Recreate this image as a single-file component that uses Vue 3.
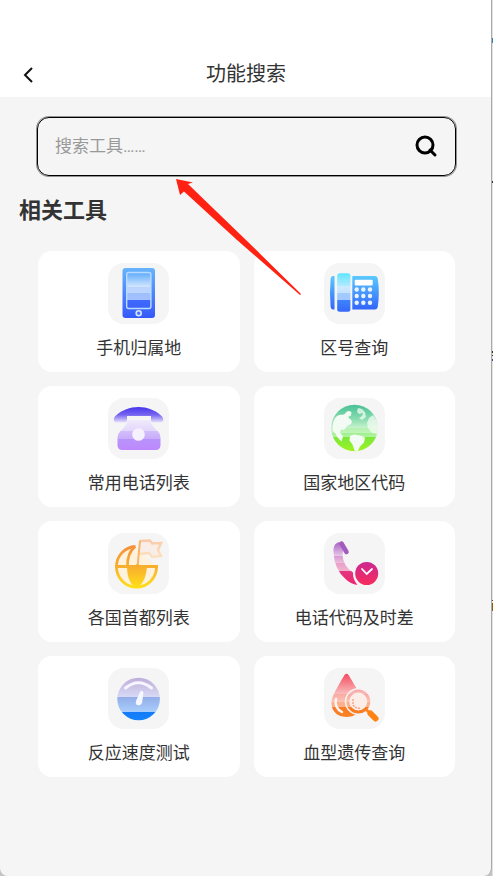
<script setup>
import { ref } from 'vue'

const keyword = ref('')

const tools = [
  { icon: 'mobile', name: '手机归属地' },
  { icon: 'telephone', name: '区号查询' },
  { icon: 'classic', name: '常用电话列表' },
  { icon: 'globe', name: '国家地区代码' },
  { icon: 'capital', name: '各国首都列表' },
  { icon: 'timezone', name: '电话代码及时差' },
  { icon: 'gauge', name: '反应速度测试' },
  { icon: 'blood', name: '血型遗传查询' }
]
</script>

<template>
  <div class="desktop">
    <div class="phone">
      <header class="navbar">
        <button class="back" type="button" aria-label="返回">
          <svg width="20" height="20" viewBox="0 0 20 20">
            <path d="M13 3 6 10l7 7" fill="none" stroke="#111" stroke-width="2" />
          </svg>
        </button>
        <h1>功能搜索</h1>
      </header>

      <main>
        <form class="search" @submit.prevent>
          <input v-model="keyword" type="text" placeholder="搜索工具……" aria-label="搜索工具" />
          <button type="submit" aria-label="搜索">
            <svg width="24" height="24" viewBox="0 0 24 24" fill="none" stroke="#000" stroke-width="3">
              <circle cx="11" cy="11" r="8" />
              <path d="m16 16 5 5" stroke-linecap="round" />
            </svg>
          </button>
        </form>

        <h2>相关工具</h2>

        <nav class="grid">
          <a v-for="tool in tools" :key="tool.icon" class="card" href="#">
            <span class="tile">
              <svg v-if="tool.icon === 'mobile'" viewBox="0 0 61 61">
                <defs>
                  <linearGradient id="mobileBody" x2="0" y2="1">
                    <stop offset="0" stop-color="#68b4fd" />
                    <stop offset="1" stop-color="#3458fa" />
                  </linearGradient>
                  <linearGradient id="mobileScreen" x2="0" y2="1">
                    <stop offset="0" stop-color="#5eaafb" />
                    <stop offset=".4" stop-color="#d3e7ff" />
                    <stop offset=".4" stop-color="#b9d4fe" />
                    <stop offset=".57" stop-color="#c0d7ff" />
                    <stop offset=".57" stop-color="#9ebffc" />
                    <stop offset=".76" stop-color="#a6c0ff" />
                    <stop offset=".76" stop-color="#3e69fb" />
                    <stop offset="1" stop-color="#3c63fa" />
                  </linearGradient>
                </defs>
                <rect x="14.5" y="5" width="32.5" height="50" rx="3" fill="url(#mobileBody)" />
                <rect x="18.7" y="9.5" width="24.2" height="36" rx="2" fill="url(#mobileScreen)" stroke="#b8dcff" stroke-width="1.4" />
                <circle cx="30.7" cy="50.2" r="2.5" fill="#4a73fb" stroke="#d5e6ff" stroke-width="1.6" />
              </svg>

              <svg v-else-if="tool.icon === 'telephone'" viewBox="0 0 61 61">
                <defs>
                  <linearGradient id="telBody" x2="0" y2="1">
                    <stop offset="0" stop-color="#5bcafd" />
                    <stop offset="1" stop-color="#3264fb" />
                  </linearGradient>
                  <linearGradient id="telHandset" x2="0" y2="1">
                    <stop offset="0" stop-color="#62e5ff" />
                    <stop offset=".34" stop-color="#b4ebff" />
                    <stop offset=".34" stop-color="#cdeaff" />
                    <stop offset=".52" stop-color="#c5e1ff" />
                    <stop offset=".52" stop-color="#a1cbff" />
                    <stop offset=".7" stop-color="#a3c6ff" />
                    <stop offset=".7" stop-color="#3e83fd" />
                    <stop offset="1" stop-color="#3568fa" />
                  </linearGradient>
                </defs>
                <path d="M10.5 13H9q-2 0-2.4 3-1.2 13.5 0 27.5.4 3 2.4 3h1.5z" fill="url(#telBody)" />
                <rect x="13.2" y="10.3" width="13.2" height="38.5" rx="2.5" fill="url(#telHandset)" />
                <path d="M28.3 13h22.5q2.5 0 3 3 2 13.5 0 27.5-.5 3-3 3H28.3z" fill="url(#telBody)" />
                <rect x="30.7" y="16.8" width="18" height="5.6" rx="1" fill="#fff" />
                <g fill="#e9f4ff">
                  <template v-for="y in [26.5, 33, 39.7]" :key="y">
                    <circle v-for="x in [32.7, 39.3, 46]" :key="x" :cx="x" :cy="y" r="2.2" />
                  </template>
                </g>
              </svg>

              <svg v-else-if="tool.icon === 'classic'" viewBox="0 0 61 61">
                <defs>
                  <linearGradient id="classicTop" x2="0" y2="1">
                    <stop offset="0" stop-color="#4735ed" />
                    <stop offset=".5" stop-color="#7664f1" />
                    <stop offset="1" stop-color="#e8e2fb" />
                  </linearGradient>
                  <linearGradient id="classicBase" x2="0" y2="1">
                    <stop offset="0" stop-color="#f0eafb" />
                    <stop offset=".36" stop-color="#e2d6fb" />
                    <stop offset=".36" stop-color="#d3bffc" />
                    <stop offset=".62" stop-color="#c9acfa" />
                    <stop offset=".62" stop-color="#b994fc" />
                    <stop offset="1" stop-color="#bd88fd" />
                  </linearGradient>
                </defs>
                <path d="M20 22h22q1.5 6 8 11.5 2.5 2.5 2.5 6V47q0 5-5 5h-33q-5 0-5-5v-7.5q0-3.5 2.5-6Q18.5 28 20 22z" fill="url(#classicBase)" />
                <path d="M6 23q-1-3 2-5.500C14 12 22 9 30.500 9S47 12 53 17.500q3 2.500 2 5.500-.6 1.500-2 1.500h-8q-2 0-2-2V18H19v4.500q0 2-2 2H8q-1.400 0-2-1.500z" fill="url(#classicTop)" />
                <circle cx="30.5" cy="36.5" r="6.300" fill="#f6f2fd" />
              </svg>

              <svg v-else-if="tool.icon === 'globe'" viewBox="0 0 61 61">
                <defs>
                  <linearGradient id="globeFill" x2="0" y2="1">
                    <stop offset="0" stop-color="#48c195" />
                    <stop offset=".3" stop-color="#86dcae" />
                    <stop offset=".49" stop-color="#c4f2cb" />
                    <stop offset=".49" stop-color="#b4f0b2" />
                    <stop offset=".6" stop-color="#bff5b5" />
                    <stop offset=".6" stop-color="#a1ee95" />
                    <stop offset=".7" stop-color="#b0f59c" />
                    <stop offset=".7" stop-color="#7be83b" />
                    <stop offset="1" stop-color="#9ef322" />
                  </linearGradient>
                </defs>
                <circle cx="30.5" cy="30" r="23.3" fill="url(#globeFill)" />
                <g fill="#f4fbf4">
                  <path d="M9 25q1-6 6-8l5-.5 3-3q3-1.500 4.500 1l-.5 3-3 1.500 2 2q3 2 1 5l-4 2-3 4-3-.5-1 3 3 4-1.500 5-4-4q-2-5-5-7z" />
                  <path d="m26 38 4-1.500 6 1 5 2-1 5-4 4-2.500 5-3-1-2-6-3-4z" />
                  <path d="m45 20 4-3q5 6 5 13l-1 6-5-1-4-5-1-5z" opacity=".75" />
                  <path d="m34 10 4 1 3 3 1 5-4 3-3-2 3-2 1-3-4 1-2-2z" opacity=".75" />
                </g>
              </svg>

              <svg v-else-if="tool.icon === 'capital'" viewBox="0 0 61 61">
                <defs>
                  <linearGradient id="capitalFill" gradientUnits="userSpaceOnUse" x1="0" y1="12" x2="0" y2="55">
                    <stop offset="0" stop-color="#f58e3b" />
                    <stop offset=".55" stop-color="#f9b22c" />
                    <stop offset="1" stop-color="#ffe018" />
                  </linearGradient>
                  <linearGradient id="flagFill" x2="0" y2="1">
                    <stop offset="0" stop-color="#fbcaa7" />
                    <stop offset="1" stop-color="#fbe1bf" />
                  </linearGradient>
                </defs>
                <path d="M27 13.500A20 20 0 0 0 8.500 33.500a20 20 0 0 0 40 0z" fill="#fff2dc" />
                <g fill="none" stroke="url(#capitalFill)" stroke-width="2.8">
                  <path d="M27.500 13.500A20 20 0 0 0 8.500 34a20 20 0 0 0 40 0" />
                  <path d="M27 13.500q-8 7-7.500 20" />
                </g>
                <rect x="7" y="32" width="43" height="3" fill="url(#capitalFill)" />
                <path d="M19 34h20q-1 13-8 20h-5q-7-7-7-20z" fill="url(#capitalFill)" />
                <path d="m32 8 10-.5 2 3 9-.5-3 7 3 6-9 1-3-4-10 1" fill="#f9eee7" stroke="url(#flagFill)" stroke-width="2.4" />
                <path d="M32 7.500 29.500 34" stroke="#f6b568" stroke-width="2" />
                <circle cx="29.5" cy="33" r="2" fill="#f9ad2d" />
              </svg>

              <svg v-else-if="tool.icon === 'timezone'" viewBox="0 0 61 61">
                <defs>
                  <linearGradient id="receiver" gradientUnits="userSpaceOnUse" x1="0" y1="8" x2="0" y2="52">
                    <stop offset="0" stop-color="#a45abd" />
                    <stop offset=".33" stop-color="#e5c4e9" />
                    <stop offset=".33" stop-color="#d797d3" />
                    <stop offset=".5" stop-color="#efbddc" />
                    <stop offset=".5" stop-color="#e8a0ca" />
                    <stop offset=".69" stop-color="#f3b3cf" />
                    <stop offset=".69" stop-color="#e33780" />
                    <stop offset="1" stop-color="#ee246c" />
                  </linearGradient>
                  <linearGradient id="clockFill" x2="0" y2="1">
                    <stop offset="0" stop-color="#cb2991" />
                    <stop offset="1" stop-color="#f82c5c" />
                  </linearGradient>
                </defs>
                <path d="M13 10q-4 2-3.500 9 .5 17 12 27 5 5 12 6-5-6-4.500-12.500Q19 33 18.500 22q0-3 1-4l-3.500-8q-1-1.500-3 0z" fill="url(#receiver)" />
                <path d="m17.500 10.500 5 8.500" stroke="#a25bbe" stroke-width="4.500" stroke-linecap="round" />
                <circle cx="42.7" cy="40.5" r="11.5" fill="url(#clockFill)" />
                <path d="m38 36 4.700 5 5.300-5" fill="none" stroke="#fff" stroke-width="1.8" stroke-linecap="round" />
              </svg>

              <svg v-else-if="tool.icon === 'gauge'" viewBox="0 0 61 61">
                <defs>
                  <linearGradient id="gaugeFill" x2="0" y2="1">
                    <stop offset="0" stop-color="#bfaed9" />
                    <stop offset=".46" stop-color="#d8daf5" />
                    <stop offset=".46" stop-color="#93aee9" />
                    <stop offset=".81" stop-color="#a9cefc" />
                    <stop offset=".81" stop-color="#147bf7" />
                    <stop offset="1" stop-color="#1683ff" />
                  </linearGradient>
                </defs>
                <circle cx="30.6" cy="31" r="21.3" fill="url(#gaugeFill)" />
                <path d="M17.500 20q13-10.500 26 0" fill="none" stroke="#f7f5ff" stroke-width="3" stroke-linecap="round" />
                <path d="m32 24-4 9q-1 4 2 4.200 3.500.3 4.200-3.200l1.300-9.500q-1.500-3-3.500-.5z" fill="#f6f8ff" />
              </svg>

              <svg v-else viewBox="0 0 61 61">
                <defs>
                  <linearGradient id="dropFill" gradientUnits="userSpaceOnUse" x1="0" y1="6" x2="0" y2="50">
                    <stop offset="0" stop-color="#f34c61" />
                    <stop offset=".45" stop-color="#f9bdbb" />
                    <stop offset=".45" stop-color="#f8a8a2" />
                    <stop offset=".64" stop-color="#fcc6b5" />
                    <stop offset=".64" stop-color="#fbb091" />
                    <stop offset=".75" stop-color="#fcb28a" />
                    <stop offset=".75" stop-color="#f87a28" />
                    <stop offset="1" stop-color="#fb8422" />
                  </linearGradient>
                </defs>
                <path d="M20.500 7q2-2.500 4 0c3 5 7.500 12 10.500 18 9 13-1 24-12 24-13 0-18.500-11-14-21C12 21 17 13 20.500 7z" fill="url(#dropFill)" />
                <path d="M12 31q-2 9 6 13" fill="none" stroke="#fff4ef" stroke-width="2.5" stroke-linecap="round" />
                <circle cx="34.3" cy="33.5" r="13.5" fill="#f9f3f1" />
                <circle cx="34.3" cy="33.5" r="10.5" fill="#fbeee9" stroke="url(#dropFill)" stroke-width="3" />
                <path d="M29 31v6q3 4 7 3" fill="none" stroke="#f8a982" stroke-width="1.5" stroke-dasharray="2 1" />
                <path d="m42 41.500 4.500 4" stroke="#fb8424" stroke-width="3" />
                <path d="m46.500 45.500 5 5" stroke="#ff8213" stroke-width="6" stroke-linecap="round" />
              </svg>
            </span>
            <span class="label">{{ tool.name }}</span>
          </a>
        </nav>
      </main>
    </div>

    <!-- sliver of the window behind the phone -->
    <div class="behind"></div>

    <svg class="arrow" width="128" height="120" viewBox="0 0 128 120">
      <path d="M1 1 18 4.500 13 6 71 62l55 54-1 1-63-55L9 13.500 5 17z" fill="#ff2213" />
    </svg>
  </div>
</template>

<style>
body {
  margin: 0;
}
</style>

<style scoped>
.desktop {
  position: relative;
  display: flex;
  min-height: 100vh;
  background: #c4c4c4;
  color: #333;
  font-family: Roboto, "Noto Sans CJK SC", sans-serif;
}

.phone {
  flex: 1;
  box-sizing: border-box;
  border-right: 1px solid #aaa;
  border-radius: 0 0 8px 8px;
  background: #f5f5f5;
}

.behind {
  width: 1px;
  background: linear-gradient(
    #e2e2e2 38px,
    #2d80c5 38px 43px,
    #e2e2e2 43px 181px,
    #333 181px 183px,
    #e2e2e2 183px 351px,
    #333 351px 353px,
    #e2e2e2 353px 355px,
    #333 355px 356px,
    #e2e2e2 356px 359px,
    #2d5e91 359px 361px,
    #e2e2e2 361px 600px,
    #444 600px 601px,
    #e2e2e2 601px 603px,
    #9b5608 603px 611px,
    #e2e2e2 611px
  );
}

.navbar {
  display: grid;
  grid-template-columns: 40px 1fr 40px;
  align-items: center;
  padding: 52px 18px 0 19px;
  background: #fff;
}

.back {
  width: 20px;
  height: 20px;
}

button {
  padding: 0;
  border: none;
  background: none;
  cursor: pointer;
}

button svg {
  display: block;
}

h1 {
  margin: 0;
  font-size: 20px;
  font-weight: 400;
  line-height: 45px;
  text-align: center;
}

main {
  padding: 20px 36px 40px 38px;
}

.search {
  display: flex;
  align-items: center;
  height: 59px;
  margin: 0 -1px;
  padding: 0 17px 2px;
  box-sizing: border-box;
  border: 1px solid #000;
  border-radius: 12px;
  box-shadow: 0 0 0 1px rgba(0, 0, 0, 0.4);
}

.search input {
  flex: 1;
  min-width: 0;
  padding: 0;
  border: none;
  outline: none;
  background: none;
  color: #333;
  font-family: inherit;
  font-size: 17px;
  line-height: 24px;
}

.search input::placeholder {
  color: #999;
  opacity: 1;
}

h2 {
  margin: 19px 0 24px -19px;
  font-size: 22px;
  font-weight: 700;
  line-height: 32px;
}

.grid {
  display: grid;
  grid-template-columns: 1fr 1fr;
  gap: 14px;
}

.card {
  display: flex;
  flex-direction: column;
  align-items: center;
  gap: 12px;
  padding: 12px 0;
  border-radius: 14px;
  background: #fff;
  color: inherit;
  text-decoration: none;
}

.tile {
  width: 61px;
  height: 61px;
  border-radius: 16px;
  background: #f5f5f5;
}

.tile svg {
  display: block;
}

.label {
  font-size: 17px;
  line-height: 24px;
}

.arrow {
  position: absolute;
  top: 178px;
  left: 175px;
  pointer-events: none;
}
</style>
